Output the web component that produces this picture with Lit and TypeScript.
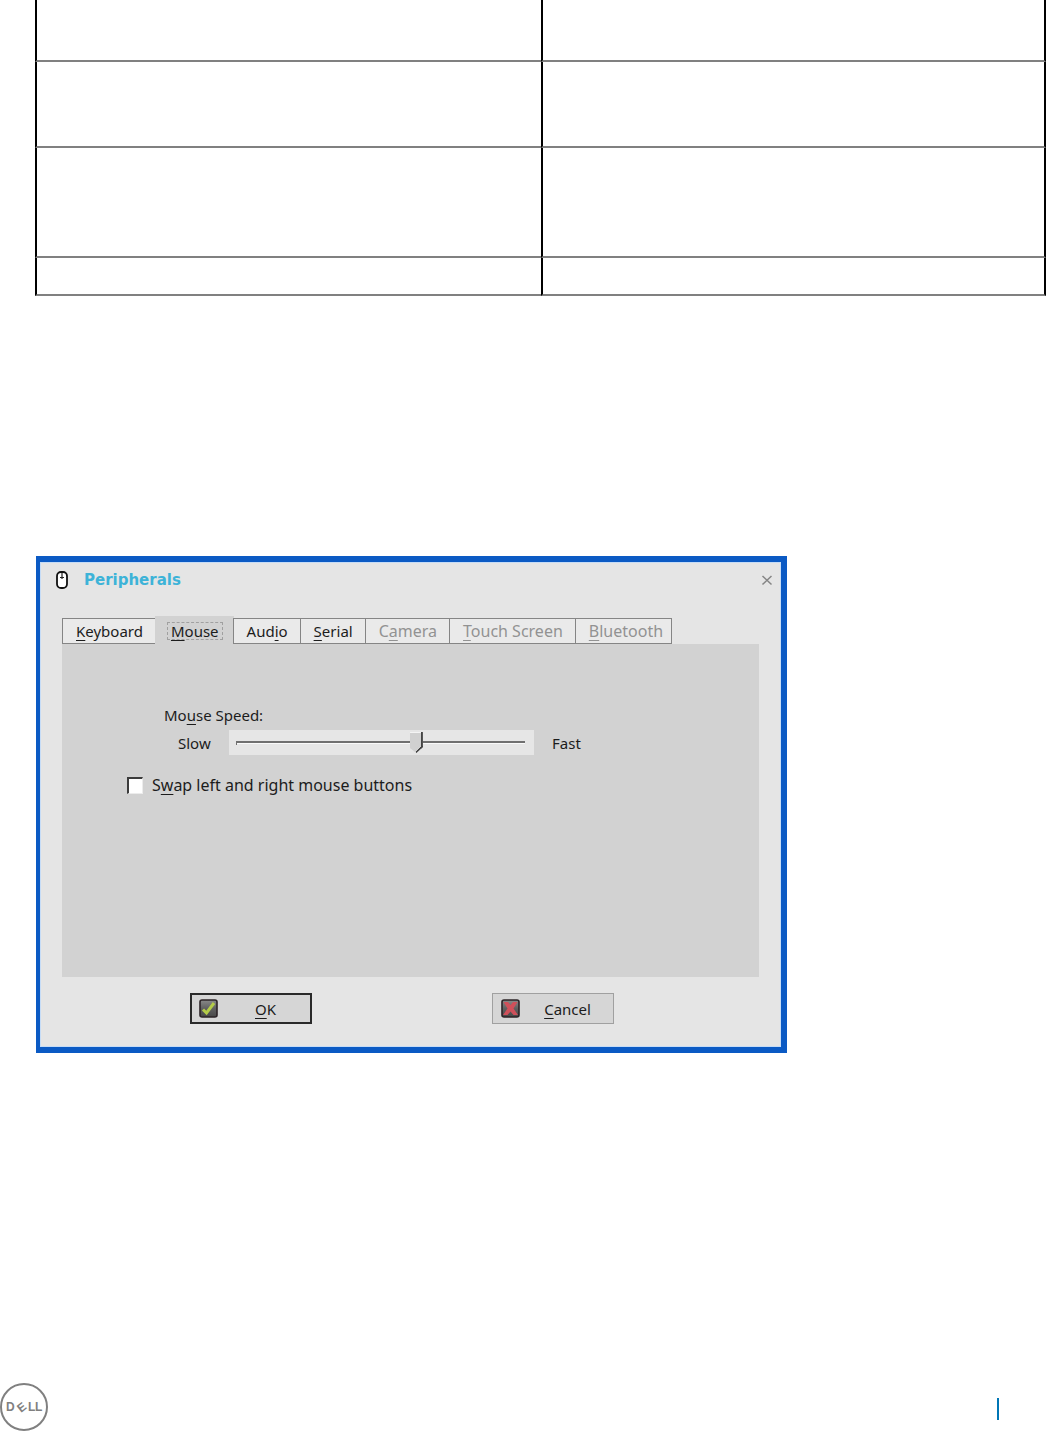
import { LitElement, html, css, svg } from "lit";
import { customElement, state } from "lit/decorators.js";

interface Tab {
  before: string;
  key: string;
  after: string;
  disabled?: boolean;
}

const TABS: Tab[] = [
  { before: "", key: "K", after: "eyboard" },
  { before: "", key: "M", after: "ouse" },
  { before: "Aud", key: "i", after: "o" },
  { before: "", key: "S", after: "erial" },
  { before: "C", key: "a", after: "mera", disabled: true },
  { before: "", key: "T", after: "ouch Screen", disabled: true },
  { before: "", key: "B", after: "luetooth", disabled: true },
];

const ROWS = ["row-a", "row-b", "row-c", "row-d"];

const mouseIcon = html`<svg class="mouse" width="12" height="18" viewBox="0 0 12 18" aria-hidden="true">
  <rect x="1" y="1" width="10" height="16" rx="4" fill="#fff" stroke="#111" stroke-width="1.8" />
  <path d="M6 2v6M4 6.500h4" stroke="#222" stroke-width="1.200" fill="none" />
</svg>`;

const iconBox = (mark: unknown) => html`<svg class="mark" width="19" height="19" viewBox="0 0 19 19" aria-hidden="true">
  <defs>
    <linearGradient id="shade" x1="0" y1="0" x2="0" y2="1">
      <stop offset="0" stop-color="#8a8a8a" />
      <stop offset="0.5" stop-color="#606060" />
      <stop offset="1" stop-color="#484848" />
    </linearGradient>
  </defs>
  <rect x="1" y="1" width="17" height="17" rx="2" fill="url(#shade)" stroke="#2c2427" stroke-width="1.6" />
  ${mark}
</svg>`;

const checkMark = svg`<path d="M4 10.5L7.5 14L15 4" fill="none" stroke="#b4cc48" stroke-width="3" />`;
const crossMark = svg`<path d="M2.5 3h4.500l2.500 3l2.500-3h4.500l-4 6.500l4.500 6.500h-4.500l-3-3.500l-3 3.500h-4.500l4.500-6.500z" fill="#cf505a" />`;

@customElement("app-root")
export class AppRoot extends LitElement {
  @state() private active = 1;

  static styles = css`
    :host {
      display: block;
      background: #fff;
      color: #1c1c1c;
      font: 15px/20px "Noto Sans", "Open Sans", sans-serif;
    }
    * {
      box-sizing: border-box;
    }
    .page {
      display: flex;
      flex-direction: column;
      min-height: 100vh;
    }
    .grid {
      width: calc(100% - 36px);
      margin: 0 1px 0 35px;
      border-spacing: 0;
      table-layout: fixed;
    }
    .grid td {
      padding: 0;
      border-left: 2px solid #000;
      border-bottom: 2px solid #808080;
    }
    .grid td:last-child {
      border-right: 2px solid #000;
    }
    .row-a { height: 62px; }
    .row-b { height: 86px; }
    .row-c { height: 110px; }
    .row-d { height: 38px; }
    .dialog {
      width: calc(100% - 36px);
      max-width: 751px;
      margin: 260px 0 40px 36px;
      border: solid #0b5ac4;
      border-width: 6px 6px 6px 4px;
      background: #e5e5e5;
      box-shadow: inset 0 0 0 1px #c6dcf6;
      padding: 7px 22px 23px 22px;
    }
    .title {
      display: flex;
      align-items: center;
      height: 22px;
      margin: 0 -14px 27px -6px;
    }
    .name {
      flex: 1;
      margin: 0 0 0 16px;
      font: 700 15px/20px "DejaVu Sans", sans-serif;
      color: #3db3d8;
    }
    .close {
      display: flex;
      padding: 0;
      border: 0;
      background: none;
    }
    .tabs {
      display: flex;
      height: 26px;
    }
    .tab {
      font: inherit;
      color: inherit;
      height: 26px;
      padding: 0 12px 0 13px;
      margin-right: -1px;
      border: 1px solid #858585;
      background: #eaeaea;
      line-height: 20px;
      white-space: nowrap;
    }
    .tab:disabled {
      color: #929292;
      font-size: 16px;
    }
    .tab:last-child {
      padding-right: 8px;
    }
    .tab.active {
      height: 28px;
      margin-top: -2px;
      padding: 2px 10px 0 11px;
      border-color: transparent;
      background: #d2d2d2;
    }
    .focus {
      display: block;
      height: 18px;
      line-height: 16px;
      padding: 0 3px;
      border: 1px dashed #a0a0a0;
    }
    .key {
      text-decoration: underline;
      text-decoration-thickness: 1px;
      text-underline-offset: 3px;
      text-decoration-skip-ink: none;
    }
    .panel {
      min-height: 333px;
      padding: 61px 65px 40px;
      background: #d2d2d2;
    }
    .speed {
      display: block;
      margin-left: 37px;
    }
    .scale {
      display: flex;
      align-items: center;
      margin: 5px 0 20px 51px;
    }
    .low {
      width: 51px;
    }
    .range {
      appearance: none;
      flex: 0 1 305px;
      min-width: 0;
      height: 25px;
      margin: 0 18px 0 0;
      padding: 0 9px 0 7px;
      background: #e6e6e6;
    }
    .range::-webkit-slider-runnable-track {
      height: 21px;
      background: linear-gradient(#707070, #707070) 0 9px / 100% 2px no-repeat,
        linear-gradient(#707070, #707070) 0 9px / 1px 4px no-repeat,
        linear-gradient(#fafafa, #fafafa) 0 11px / 100% 1px no-repeat;
    }
    .range::-webkit-slider-thumb {
      appearance: none;
      width: 13px;
      height: 21px;
      background: linear-gradient(135deg, transparent 36%, #444 37%) 100% 100% / 7px 7px no-repeat,
        linear-gradient(#444, #444) 100% 0 / 2px 100% no-repeat,
        linear-gradient(#f4f4f4, #f4f4f4) 0 0 / 100% 1px no-repeat, #d0d0d0;
      clip-path: polygon(0 0, 100% 0, 100% 71%, 50% 100%, 0 76%);
    }
    .swap {
      display: flex;
      align-items: center;
      gap: 9px;
      font-size: 16px;
    }
    .box {
      appearance: none;
      width: 16px;
      height: 17px;
      margin: 0;
      background: #fff;
      border: solid #3c3c3c;
      border-width: 2px 1px 1px 2px;
      border-right-color: #ececec;
      border-bottom-color: #ececec;
    }
    .actions {
      display: flex;
      justify-content: space-between;
      margin-top: 16px;
      padding: 0 145px 0 128px;
    }
    .action {
      display: flex;
      align-items: center;
      width: 122px;
      height: 31px;
      padding: 0 8px;
      font: inherit;
      color: inherit;
      background: #d6d6d6;
      border: 1px solid #a0a0a0;
    }
    .action.main {
      border: 2px solid #2a2a2a;
      padding: 0 7px;
    }
    .caption {
      flex: 1;
      text-align: center;
      padding-left: 10px;
    }
    .foot {
      display: flex;
      justify-content: space-between;
      align-items: center;
      margin-top: auto;
      height: 49px;
      padding-right: 48px;
    }
    .logo {
      display: block;
    }
    .word {
      font: 700 12px "Liberation Sans", sans-serif;
      fill: #808080;
    }
    .rule {
      width: 2px;
      height: 22px;
      margin-top: 2px;
      background: #0076b5;
    }
  `;

  private caption(t: Tab) {
    return html`${t.before}<span class="key">${t.key}</span>${t.after}`;
  }

  render() {
    return html`<div class="page">
      <table class="grid">
        <tbody>
          ${ROWS.map((r) => html`<tr class=${r}><td></td><td></td></tr>`)}
        </tbody>
      </table>

      <section class="dialog" role="dialog" aria-labelledby="name">
        <header class="title">
          ${mouseIcon}
          <h1 class="name" id="name">Peripherals</h1>
          <button class="close" aria-label="Close">
            <svg width="12" height="12" viewBox="0 0 12 12" aria-hidden="true">
              <path d="M1.500 2L10.500 10.500M10.500 2L1.500 10.500" stroke="#858585" stroke-width="1.500" />
            </svg>
          </button>
        </header>
        <nav class="tabs" role="tablist">
          ${TABS.map(
            (t, i) => html`<button
              class="tab ${i === this.active ? "active" : ""}"
              role="tab"
              aria-selected=${i === this.active}
              ?disabled=${t.disabled}
              @click=${() => (this.active = i)}
            >${i === this.active ? html`<span class="focus">${this.caption(t)}</span>` : this.caption(t)}</button>`
          )}
        </nav>
        <div class="panel" role="tabpanel">
          <label class="speed" for="speed">Mo<span class="key">u</span>se Speed:</label>
          <div class="scale">
            <span class="low">Slow</span>
            <input class="range" id="speed" type="range" min="0" max="100" value="63" />
            <span>Fast</span>
          </div>
          <div class="swap">
            <input class="box" id="swap" type="checkbox" />
            <label for="swap">S<span class="key">w</span>ap left and right mouse buttons</label>
          </div>
        </div>
        <div class="actions">
          <button class="action main">${iconBox(checkMark)}<span class="caption"><span class="key">O</span>K</span></button>
          <button class="action">${iconBox(crossMark)}<span class="caption"><span class="key">C</span>ancel</span></button>
        </div>
      </section>

      <footer class="foot">
        <svg class="logo" width="49" height="49" viewBox="0 0 49 49" role="img" aria-label="Dell">
          <circle cx="24" cy="24" r="23" fill="none" stroke="#808080" stroke-width="2" />
          <g class="word">
            <text x="6" y="28">D</text>
            <text transform="translate(21 30) rotate(-38)">E</text>
            <text x="28" y="28">L</text>
            <text x="35" y="28">L</text>
          </g>
        </svg>
        <span class="rule"></span>
      </footer>
    </div>`;
  }
}
